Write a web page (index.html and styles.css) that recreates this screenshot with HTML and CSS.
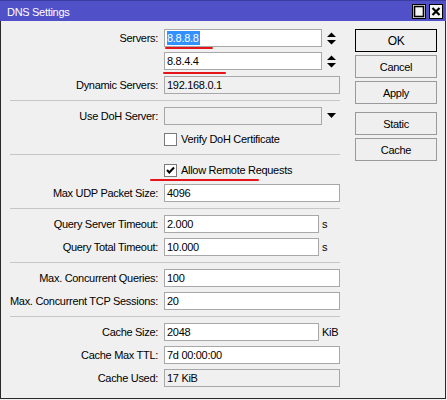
FILE: index.html
```html
<!DOCTYPE html>
<html>
<head>
<meta charset="utf-8">
<link rel="stylesheet" href="styles.css">
</head>
<body>
<div class="window">
  <div class="titlebar">
    <span class="title">DNS Settings</span>
    <div class="tb-btns">
      <span class="tb-btn"><svg width="12" height="13" viewBox="0 0 12 13"><rect x="1.5" y="1.5" width="9" height="10" fill="none" stroke="#000" stroke-width="1.6"/></svg></span>
      <span class="tb-btn"><svg width="12" height="13" viewBox="0 0 12 13"><path d="M2.5 3 L9.5 10 M9.5 3 L2.5 10" stroke="#000" stroke-width="2.2"/></svg></span>
    </div>
  </div>
  <div class="content">
    <div class="form">
      <div class="group">
        <div class="row">
          <span class="label">Servers:</span>
          <span class="field short"><span class="sel">8.8.8.8</span></span>
          <svg class="updown" width="9" height="13" viewBox="0 0 9 13"><path d="M0 5 L4.5 0.5 L9 5 Z M0 8 L9 8 L4.5 12.5 Z" fill="#000"/></svg>
        </div>
        <div class="row">
          <span class="label"></span>
          <span class="field short">8.8.4.4</span>
          <svg class="updown" width="9" height="13" viewBox="0 0 9 13"><path d="M0 5 L4.5 0.5 L9 5 Z M0 8 L9 8 L4.5 12.5 Z" fill="#000"/></svg>
        </div>
        <div class="row shift">
          <span class="label">Dynamic Servers:</span>
          <span class="field ro">192.168.0.1</span>
        </div>
      </div>
      <div class="sep"></div>
      <div class="group">
        <div class="row">
          <span class="label">Use DoH Server:</span>
          <span class="field short ro"></span>
          <svg class="dropdown" width="9" height="5" viewBox="0 0 9 5"><path d="M0 0 L9 0 L4.5 5 Z" fill="#000"/></svg>
        </div>
        <div class="row">
          <span class="label"></span>
          <span class="check"></span>
          <span class="check-text">Verify DoH Certificate</span>
        </div>
      </div>
      <div class="sep"></div>
      <div class="group">
        <div class="row">
          <span class="label"></span>
          <span class="check"><svg width="11" height="11" viewBox="0 0 11 11"><path d="M2 5 L4.3 7.5 L9 2.5" fill="none" stroke="#000" stroke-width="2"/></svg></span>
          <span class="check-text">Allow Remote Requests</span>
        </div>
        <div class="row">
          <span class="label">Max UDP Packet Size:</span>
          <span class="field">4096</span>
        </div>
      </div>
      <div class="sep"></div>
      <div class="group">
        <div class="row">
          <span class="label">Query Server Timeout:</span>
          <span class="field mid">2.000</span>
          <span class="unit">s</span>
        </div>
        <div class="row">
          <span class="label">Query Total Timeout:</span>
          <span class="field mid">10.000</span>
          <span class="unit">s</span>
        </div>
      </div>
      <div class="sep"></div>
      <div class="group">
        <div class="row">
          <span class="label">Max. Concurrent Queries:</span>
          <span class="field">100</span>
        </div>
        <div class="row">
          <span class="label">Max. Concurrent TCP Sessions:</span>
          <span class="field">20</span>
        </div>
      </div>
      <div class="sep"></div>
      <div class="group">
        <div class="row">
          <span class="label">Cache Size:</span>
          <span class="field mid">2048</span>
          <span class="unit">KiB</span>
        </div>
        <div class="row">
          <span class="label">Cache Max TTL:</span>
          <span class="field">7d 00:00:00</span>
        </div>
        <div class="row">
          <span class="label">Cache Used:</span>
          <span class="field ro">17 KiB</span>
        </div>
      </div>
    </div>
    <div class="buttons">
      <div class="btn default">OK</div>
      <div class="btn">Cancel</div>
      <div class="btn">Apply</div>
      <div class="btn spaced">Static</div>
      <div class="btn">Cache</div>
    </div>
  </div>
</div>
<div class="mark m1"></div>
<div class="mark m2"></div>
<div class="mark m3"></div>
</body>
</html>
```

FILE: styles.css
```css
html, body {
  margin: 0;
  padding: 0;
  background: #f0f0f0;
}
body {
  font-family: "Liberation Sans", Arial, sans-serif;
  font-size: 11px;
  letter-spacing: -0.3px;
  color: #000;
  position: relative;
  width: 447px;
  height: 400px;
  overflow: hidden;
}
.window {
  width: 446px;
  height: 399px;
  box-sizing: border-box;
  border: 1px solid #2a2a2a;
  border-top: none;
  background: #f0f0f0;
}
.titlebar {
  height: 21px;
  margin: 0 -1px;
  background: #5050c8;
  border-top: 1px solid #3c3ca0;
  box-sizing: border-box;
  display: flex;
  align-items: center;
  justify-content: space-between;
  padding: 0 3px 0 7px;
  color: #fff;
}
.title {
  padding-top: 1px;
}
.tb-btns {
  display: flex;
  gap: 3px;
}
.tb-btn {
  width: 14px;
  height: 15px;
  box-sizing: border-box;
  border: 1px solid #000;
  background: #f4f4f4;
  display: flex;
  align-items: center;
  justify-content: center;
}
.tb-btn svg {
  display: block;
}
.content {
  display: flex;
  padding-top: 8px;
}
.form {
  width: 340px;
  flex: none;
}
.group {
  display: flex;
  flex-direction: column;
  gap: 5px;
}
.row {
  display: flex;
  align-items: center;
  height: 18px;
}
.row.shift {
  margin-top: 1px;
}
.label {
  width: 157px;
  flex: none;
  text-align: right;
  margin-right: 6px;
  white-space: nowrap;
}
.field {
  width: 176px;
  height: 18px;
  box-sizing: border-box;
  border: 1px solid #a8a8a8;
  background: #fff;
  padding: 0 2px;
  line-height: 16px;
  white-space: nowrap;
  flex: none;
}
.field.short {
  width: 158px;
}
.field.mid {
  width: 155px;
}
.field.ro {
  background: #f0f0f0;
}
.sel {
  display: inline-block;
  background: #3390ff;
  color: #fff;
  line-height: 14px;
  height: 14px;
  padding-right: 1px;
  vertical-align: top;
  margin-top: 1px;
}
.updown {
  margin-left: 5px;
  display: block;
}
.dropdown {
  margin-left: 5px;
  margin-top: -2px;
  display: block;
}
.unit {
  margin-left: 3px;
}
.check {
  width: 13px;
  height: 13px;
  box-sizing: border-box;
  border: 1px solid #7a7a7a;
  background: #fff;
  flex: none;
  display: flex;
  align-items: center;
  justify-content: center;
}
.check svg {
  display: block;
}
.check-text {
  margin-left: 4px;
}
.sep {
  width: 330px;
  height: 1px;
  background: #c6c6c6;
  margin: 6px 0 6px 9px;
}
.buttons {
  margin-left: 14px;
  width: 82px;
  display: flex;
  flex-direction: column;
  gap: 3px;
}
.btn {
  height: 23px;
  box-sizing: border-box;
  border: 1px solid #9a9a9a;
  background: #efefef;
  display: flex;
  align-items: center;
  justify-content: center;
}
.btn.default {
  border: 1px solid #000;
  font-size: 12px;
}
.btn.spaced {
  margin-top: 5px;
}
.mark {
  position: absolute;
  height: 2px;
  background: #e4141a;
  border-radius: 1px;
}
.m1 {
  left: 165px;
  top: 47px;
  width: 48px;
}
.m2 {
  left: 163px;
  top: 72px;
  width: 63px;
}
.m3 {
  left: 150px;
  top: 179px;
  width: 109px;
}
```
